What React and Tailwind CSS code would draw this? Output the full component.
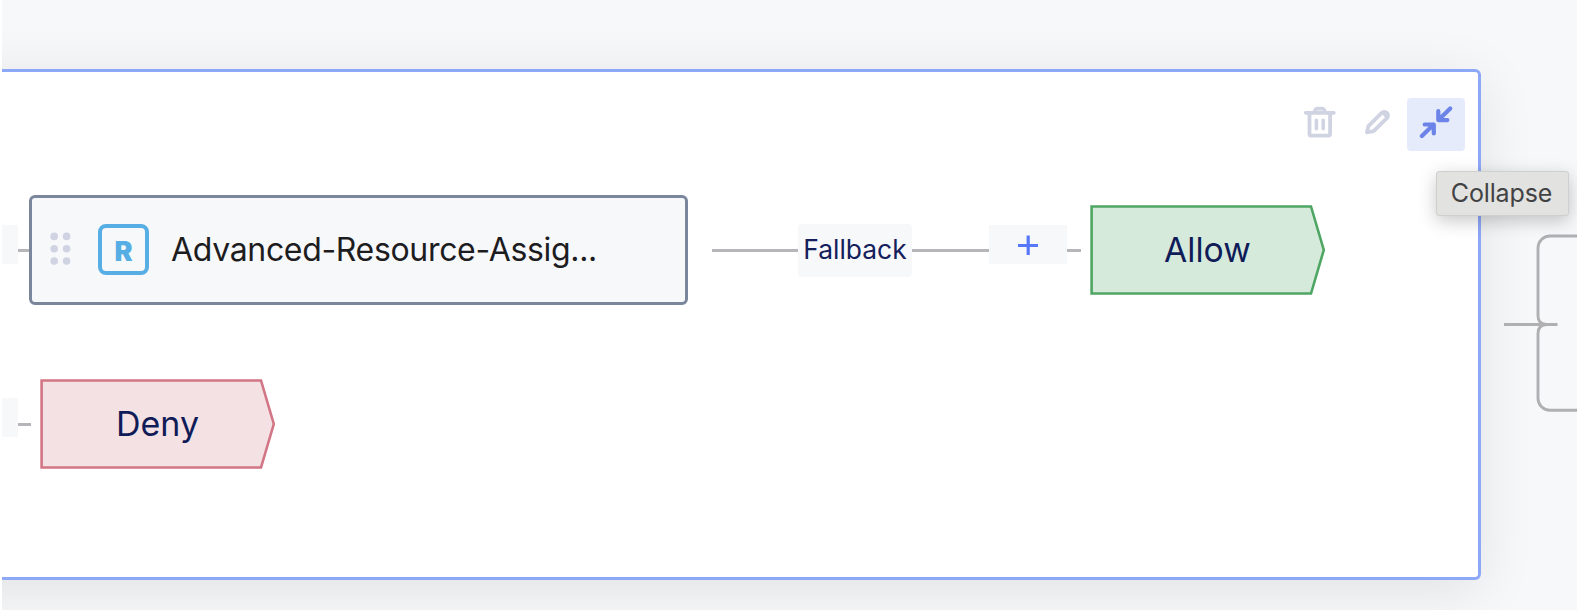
import React from "react";

function Line({ className }) {
  return <div className={`h-[3px] shrink-0 bg-[#b5b5ba] ${className}`} />;
}

function OutcomeNode({ label, fill, stroke, textClass }) {
  return (
    <div className="grid h-[90px] w-[236px] shrink-0">
      <svg className="col-start-1 row-start-1" width="236" height="90" viewBox="0 0 236 90">
        <path d="M1.6 1.5H221L233.8 45L221 88.5H1.6Z" fill={fill} stroke={stroke} strokeWidth="2.6" />
      </svg>
      <span className={`z-10 col-start-1 row-start-1 self-center justify-self-start text-[#0f1c58] leading-10 ${textClass}`}>
        {label}
      </span>
    </div>
  );
}

function ResourceNode() {
  return (
    <div className="flex h-[110px] w-[659px] shrink-0 items-center rounded-md border-3 border-[#7a869c] bg-[#f7f8fa]">
      <svg className="mt-[-2px] ml-[18px] shrink-0" width="22" height="34" viewBox="0 0 22 34" fill="#cfd3e2">
        <circle cx="4.2" cy="4.4" r="3.8" />
        <circle cx="16.6" cy="4.4" r="3.8" />
        <circle cx="4.2" cy="16.7" r="3.8" />
        <circle cx="16.6" cy="16.7" r="3.8" />
        <circle cx="4.2" cy="29" r="3.8" />
        <circle cx="16.6" cy="29" r="3.8" />
      </svg>
      <div className="mt-[-1px] ml-[26px] flex size-[51px] shrink-0 items-center justify-center rounded-lg border-4 border-[#56aee4] text-[27px] leading-none font-black text-[#56aee4]">
        <span className="mt-[3px]">R</span>
      </div>
      <span className="mt-[-1px] ml-[22px] text-[32px] leading-10 tracking-[-0.33px] whitespace-nowrap text-[#1d1d1f]">
        Advanced-Resource-Assig...
      </span>
    </div>
  );
}

function Toolbar() {
  return (
    <div className="flex h-[53px] justify-end pr-[13px]">
      <svg className="mt-[8px]" width="32" height="33" viewBox="0 0 32 33" fill="none" stroke="#d0d4e2" strokeWidth="3.8" strokeLinecap="round" strokeLinejoin="round">
        <path d="M1.8 6.8H29.8M5.5 7.5V28Q5.5 29.6 7.1 29.6H24.5Q26.100 29.6 26.100 28V7.5" />
        <path d="M10.6 6L11.2 3.9Q11.6 2.6 13 2.6H18.4Q19.8 2.6 20.2 3.9L20.8 6" />
        <path d="M12.4 14.2V22.8M19.2 14.2V22.8" strokeWidth="3.5" />
      </svg>
      <svg className="mt-[11px] ml-[29px]" width="26" height="26" viewBox="0 0 26 26" fill="none" stroke="#d0d4e2" strokeWidth="3.8" strokeLinejoin="round">
        <path d="M1.9 23.3L3.4 17.2L16.7 3.9A3.65 3.65 0 0 1 21.9 9.1L8.6 22.2Z" />
        <path d="M15.4 3.6L22.2 10.4L23.6 8V4L21 1.8H17.5Z" fill="#d0d4e2" stroke="none" />
      </svg>
      <div className="ml-[16px] h-[53px] w-[58px] rounded bg-[#e5ebfa] pt-[8px] pl-[11.5px]">
        <svg width="34" height="34" viewBox="0 0 34 34" fill="none" stroke="#6c83e8" strokeWidth="4.2" strokeLinecap="round" strokeLinejoin="round">
          <path d="M31.2 2.5L19.5 14.1M19.3 5.2V14.1H28.4" />
          <path d="M2.9 30.1L14.6 18.5M5.7 18.5H14.8V27.4" />
        </svg>
      </div>
    </div>
  );
}

export default function App() {
  return (
    <div className="h-[610px] w-[1580px] overflow-hidden bg-white pr-[3px] pl-[2px] font-['Inter','Liberation_Sans',sans-serif]">
      <div className="relative flex h-full items-start overflow-hidden bg-[#f6f8fa] pt-[69px]">
        <section className="-ml-[120px] h-[511px] w-[1599px] shrink-0 rounded-md border-y-3 border-r-3 border-[#8ea8f8] bg-white pt-[26px] pl-[120px] shadow-[0_10px_56px_rgba(0,0,0,0.095)]">
          <Toolbar />
          <div className="mt-[43px] flex h-[112px] items-center">
            <div className="mt-[-11px] h-[39px] w-4 shrink-0 bg-[#f7f8fa]" />
            <Line className="w-[11px]" />
            <ResourceNode />
            <Line className="ml-[24px] w-[86px]" />
            <div className="flex h-[53px] w-[114px] shrink-0 items-center justify-center rounded bg-[#f7f8fa] pb-[3px] text-[26.4px] leading-8 text-[#14205c]">
              Fallback
            </div>
            <Line className="w-[77px]" />
            <div className="mt-[-11px] flex h-[39px] w-[78px] shrink-0 items-center justify-center bg-[#f7f8fa]">
              <svg width="20" height="20" viewBox="0 0 20 20" stroke="#5878fb" strokeWidth="3.2">
                <path d="M0 10.5H20M10.2 .5V20" />
              </svg>
            </div>
            <Line className="mr-[9px] w-[14px]" />
            <OutcomeNode label="Allow" fill="#d6eadc" stroke="#4fa663" textClass="ml-[74px] text-[33.7px]" />
          </div>
          <div className="mt-[73px] flex h-[90px] items-center">
            <div className="mt-[-14px] h-[39px] w-4 shrink-0 bg-[#f7f8fa]" />
            <Line className="mr-[9px] w-[13px]" />
            <OutcomeNode label="Deny" fill="#f4e1e3" stroke="#d27585" textClass="ml-[76px] text-[34px]" />
          </div>
        </section>
        <svg className="z-10 mt-[163px] ml-[22px] shrink-0" width="74" height="182" viewBox="0 0 74 182" fill="none" stroke="#b0b0b3" strokeWidth="2.9">
          <path d="M1 92.5H54.5" />
          <path d="M76 4H47a12 12 0 0 0-12 12V84q0 8.5 9 8.5q-9 0-9 9V166.3a12 12 0 0 0 12 12H76" />
        </svg>
        <div className="absolute top-[171px] left-[1434px] z-20 flex h-[45px] w-[133px] items-center justify-center rounded-[3px] border border-[#cfcfce] bg-[#e2e2e0] pr-[2px] text-[25px] tracking-[-0.15px] text-[#424244] shadow-[0_5px_18px_rgba(0,0,0,0.22)]">
          Collapse
        </div>
      </div>
    </div>
  );
}
